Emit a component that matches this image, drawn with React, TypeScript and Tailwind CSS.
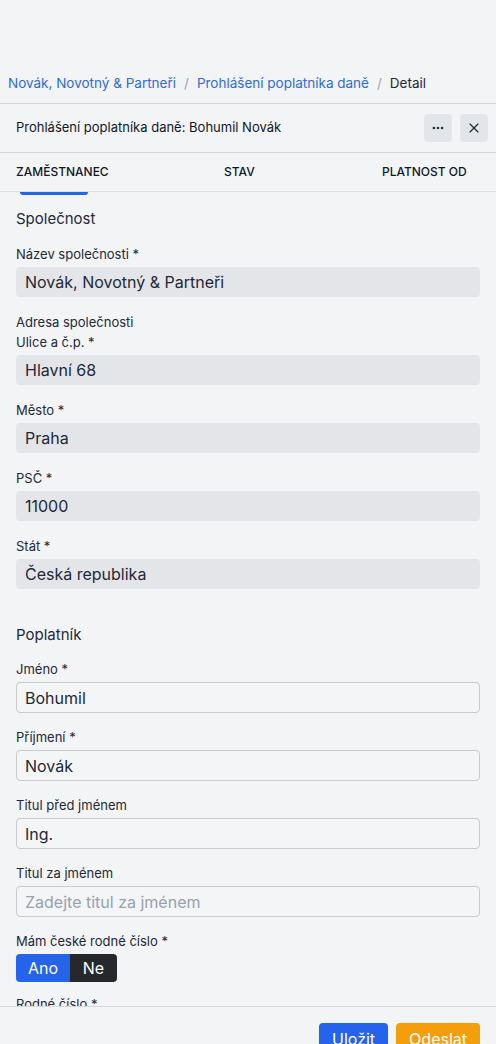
import React, { ReactElement } from 'react';
import { Ellipsis, X } from 'lucide-react';

const font = { fontFamily: 'Inter, "Noto Sans", sans-serif' };

function ReadonlyField({ label, value }: { label: React.ReactNode; value: string }): ReactElement {
  return (
    <div>
      <div className="mb-[3px] text-[13px] leading-5 text-gray-800">{label}</div>
      <div className="flex h-[30px] items-center rounded bg-[#e4e5e8] px-[9px] text-[16px] text-gray-800">
        {value}
      </div>
    </div>
  );
}

function InputField({ label, value, placeholder }: { label: string; value?: string; placeholder?: string }): ReactElement {
  return (
    <div>
      <div className="mb-[3px] text-[13px] leading-5 text-gray-800">{label}</div>
      <div className="flex h-[31px] items-center rounded border border-[#c9cbcf] bg-[#f4f5f7] px-2 text-[16px]">
        {value ? (
          <span className="text-gray-800">{value}</span>
        ) : (
          <span className="text-gray-400">{placeholder}</span>
        )}
      </div>
    </div>
  );
}

export default function App(): ReactElement {
  return (
    <div className="h-screen overflow-hidden bg-[#f3f4f6]" style={font}>
      <div className="pt-[60px]">
        {/* breadcrumb */}
        <div className="flex h-[44px] items-center gap-2 border-b border-[#d4d6da] px-2 pt-[3px] text-[13.5px]">
          <a className="text-[#2f6bdc]">Novák, Novotný &amp; Partneři</a>
          <span className="text-gray-400">/</span>
          <a className="text-[#2f6bdc]">Prohlášení poplatníka daně</a>
          <span className="text-gray-400">/</span>
          <span className="text-gray-800">Detail</span>
        </div>

        {/* header */}
        <div className="flex h-[49px] items-center justify-between border-b border-[#d4d6da] pl-4 pr-2">
          <div className="text-[13px] text-gray-900">Prohlášení poplatníka daně: Bohumil Novák</div>
          <div className="flex gap-2">
            <button className="flex h-7 w-7 items-center justify-center rounded bg-[#e4e5e8] text-gray-800">
              <Ellipsis size={14} strokeWidth={2.5} />
            </button>
            <button className="flex h-7 w-7 items-center justify-center rounded bg-[#e4e5e8] text-gray-800">
              <X size={16} strokeWidth={1.75} />
            </button>
          </div>
        </div>

        {/* table header */}
        <div className="flex h-[39px] items-center border-b border-[#dcdee2] pl-4 text-[12px] font-medium uppercase text-gray-900">
          <div className="w-[208px]">Zaměstnanec</div>
          <div className="w-[158px]">Stav</div>
          <div>Platnost od</div>
        </div>

        {/* scrolled content */}
        <div className="h-[814px] overflow-hidden px-4">
          <div className="ml-1 h-[3px] w-[68px] rounded-b bg-[#2563eb]" />

          <div className="mt-[13px] text-[15px] leading-[22px] text-gray-800">Společnost</div>
          <div className="mt-[14px] flex flex-col gap-[15px]">
            <ReadonlyField label="Název společnosti *" value="Novák, Novotný & Partneři" />
            <ReadonlyField
              label={
                <>
                  Adresa společnosti
                  <br />
                  Ulice a č.p. *
                </>
              }
              value="Hlavní 68"
            />
            <ReadonlyField label="Město *" value="Praha" />
            <ReadonlyField label="PSČ *" value="11000" />
            <ReadonlyField label="Stát *" value="Česká republika" />
          </div>

          <div className="mt-[35px] text-[15px] leading-[22px] text-gray-800">Poplatník</div>
          <div className="mt-[13px] flex flex-col gap-[14px]">
            <InputField label="Jméno *" value="Bohumil" />
            <InputField label="Příjmení *" value="Novák" />
            <InputField label="Titul před jménem" value="Ing." />
            <InputField label="Titul za jménem" placeholder="Zadejte titul za jménem" />
            <div>
              <div className="mb-[3px] text-[13px] leading-5 text-gray-800">Mám české rodné číslo *</div>
              <div className="flex h-7 w-fit overflow-hidden rounded text-[16px] text-white">
                <div className="flex w-[54px] items-center justify-center bg-[#2563eb]">Ano</div>
                <div className="flex w-[47px] items-center justify-center bg-[#27282c]">Ne</div>
              </div>
            </div>
            <div className="-mt-[2px] text-[13px] leading-5 text-gray-800">Rodné číslo *</div>
          </div>
        </div>

        {/* footer */}
        <div className="flex justify-end gap-2 border-t border-[#d4d6da] px-4 pt-4">
          <button className="h-8 rounded bg-[#2563eb] px-[13px] text-[16px] text-white">Uložit</button>
          <button className="h-8 rounded bg-[#f59e0b] px-[13px] text-[16px] text-white">Odeslat</button>
        </div>
      </div>
    </div>
  );
}
